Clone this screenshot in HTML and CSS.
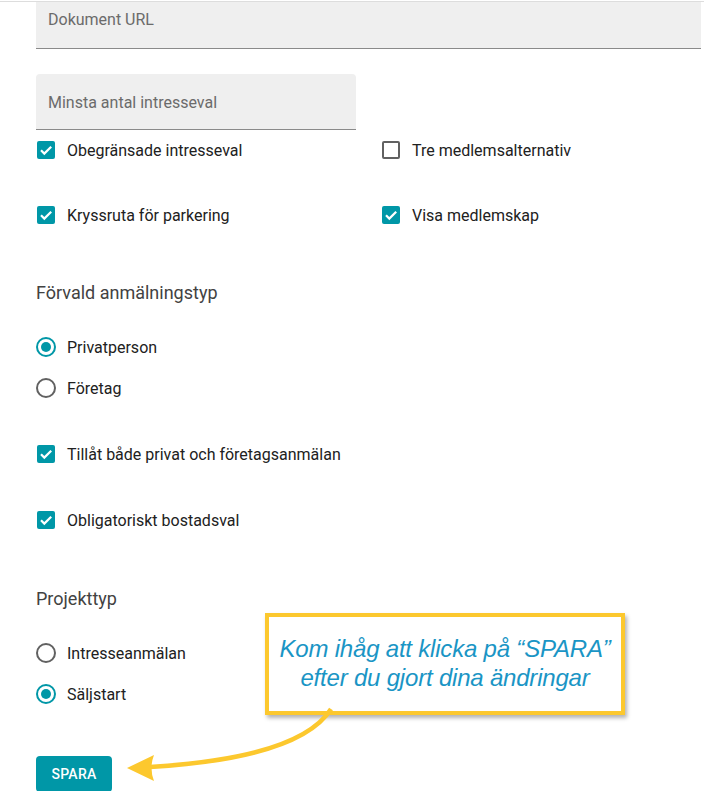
FILE: index.html
```html
<!DOCTYPE html>
<html lang="sv">
<head>
<meta charset="utf-8">
<title>Inställningar</title>
<link rel="stylesheet" href="styles.css">
</head>
<body>
<div class="page">
  <div class="field field-wide"><span class="field-label">Dokument URL</span></div>
  <div class="field field-narrow"><span class="field-label">Minsta antal intresseval</span></div>

  <div class="check-grid">
    <label class="opt"><span class="cb on"><svg viewBox="0 0 18 18"><path d="M4 9.3l3.3 3.3L14.2 5.7"/></svg></span>Obegränsade intresseval</label>
    <label class="opt"><span class="cb"></span>Tre medlemsalternativ</label>
    <label class="opt"><span class="cb on"><svg viewBox="0 0 18 18"><path d="M4 9.3l3.3 3.3L14.2 5.7"/></svg></span>Kryssruta för parkering</label>
    <label class="opt"><span class="cb on"><svg viewBox="0 0 18 18"><path d="M4 9.3l3.3 3.3L14.2 5.7"/></svg></span>Visa medlemskap</label>
  </div>

  <h3 class="group-title">Förvald anmälningstyp</h3>
  <div class="radio-group">
    <label class="opt radio"><span class="rb on"></span>Privatperson</label>
    <label class="opt radio"><span class="rb"></span>Företag</label>
  </div>

  <label class="opt single"><span class="cb on"><svg viewBox="0 0 18 18"><path d="M4 9.3l3.3 3.3L14.2 5.7"/></svg></span>Tillåt både privat och företagsanmälan</label>
  <label class="opt single"><span class="cb on"><svg viewBox="0 0 18 18"><path d="M4 9.3l3.3 3.3L14.2 5.7"/></svg></span>Obligatoriskt bostadsval</label>

  <h3 class="group-title second">Projekttyp</h3>
  <div class="radio-group">
    <label class="opt radio"><span class="rb"></span>Intresseanmälan</label>
    <label class="opt radio"><span class="rb on"></span>Säljstart</label>
  </div>

  <button class="save">SPARA</button>

  <div class="callout">Kom ihåg att klicka på “SPARA”<br>efter du gjort dina ändringar</div>
  <svg class="arrow" viewBox="0 0 704 791" width="704" height="791">
    <path class="shaft" d="M331 709 Q300 758 150 767"/>
    <path class="head" d="M127 768 L154 755 Q149 768 154 781 Z"/>
  </svg>
</div>
</body>
</html>
```
FILE: styles.css
```css
html, body {
  margin: 0;
  padding: 0;
  background: #fff;
}
body {
  font-family: Roboto, "Liberation Sans", Arial, sans-serif;
  color: #212121;
  overflow: hidden;
}
.page {
  position: relative;
  width: 704px;
  height: 790px;
  margin-top: 1px;
  border-top: 1px solid #dddddd;
  box-sizing: border-box;
  padding: 0 3px 0 36px;
}
.field {
  background: #efefef;
  border-bottom: 1px solid #8a8a8a;
  box-sizing: border-box;
  display: flex;
  align-items: center;
  padding-left: 12px;
}
.field-label {
  font-size: 16px;
  color: #6b6b6b;
}
.field-wide {
  height: 47px;
  padding-bottom: 11px;
}
.field-narrow {
  width: 320px;
  height: 56px;
  margin-top: 25px;
  border-radius: 4px 4px 0 0;
  padding-top: 1px;
}
.check-grid {
  display: grid;
  grid-template-columns: 345px 1fr;
  row-gap: 41px;
  margin-top: 8px;
}
.opt {
  display: flex;
  align-items: center;
  height: 24px;
  font-size: 16px;
  color: #212121;
  gap: 12px;
}
.opt.radio {
  gap: 11px;
}
.cb {
  width: 18px;
  height: 18px;
  box-sizing: border-box;
  border: 2px solid #616161;
  border-radius: 2px;
  margin-left: 1px;
  flex: none;
  display: flex;
}
.cb.on {
  background: #0097a7;
  border-color: #0097a7;
  border-width: 0;
}
.cb svg {
  width: 18px;
  height: 18px;
}
.cb svg path {
  fill: none;
  stroke: #fff;
  stroke-width: 2.2;
}
.group-title {
  margin: 54px 0 0;
  font-size: 18px;
  font-weight: 400;
  line-height: 24px;
  color: #424242;
}
.group-title.second {
  margin-top: 55px;
}
.radio-group {
  display: flex;
  flex-direction: column;
  gap: 17px;
  margin-top: 30px;
}
.rb {
  width: 20px;
  height: 20px;
  box-sizing: border-box;
  border: 2px solid #616161;
  border-radius: 50%;
  flex: none;
  display: flex;
  align-items: center;
  justify-content: center;
}
.rb.on {
  border-color: #0097a7;
}
.rb.on::after {
  content: "";
  width: 10px;
  height: 10px;
  border-radius: 50%;
  background: #0097a7;
}
.single {
  margin-top: 42px;
}
.save {
  display: block;
  margin-top: 50px;
  width: 76px;
  height: 36px;
  border: 0;
  border-radius: 4px;
  background: #0097a7;
  color: #fff;
  font-family: Roboto, "Liberation Sans", Arial, sans-serif;
  font-size: 14px;
  font-weight: 500;
  letter-spacing: 0.3px;
  padding: 0;
}
.callout {
  position: absolute;
  left: 265px;
  top: 611px;
  width: 360px;
  height: 102px;
  box-sizing: border-box;
  border: 4px solid #fcc82e;
  background: #fff;
  box-shadow: 2px 3px 4px rgba(0, 0, 0, 0.3);
  font-family: "Liberation Sans", Arial, sans-serif;
  font-style: italic;
  font-size: 24px;
  line-height: 29px;
  color: #1a95c5;
  text-align: center;
  padding-top: 17px;
  letter-spacing: -0.2px;
}
.arrow {
  position: absolute;
  left: 0;
  top: -2px;
  pointer-events: none;
  overflow: visible;
}
.shaft {
  fill: none;
  stroke: #fcc82e;
  stroke-width: 4.5;
}
.head {
  fill: #fcc82e;
}
```
